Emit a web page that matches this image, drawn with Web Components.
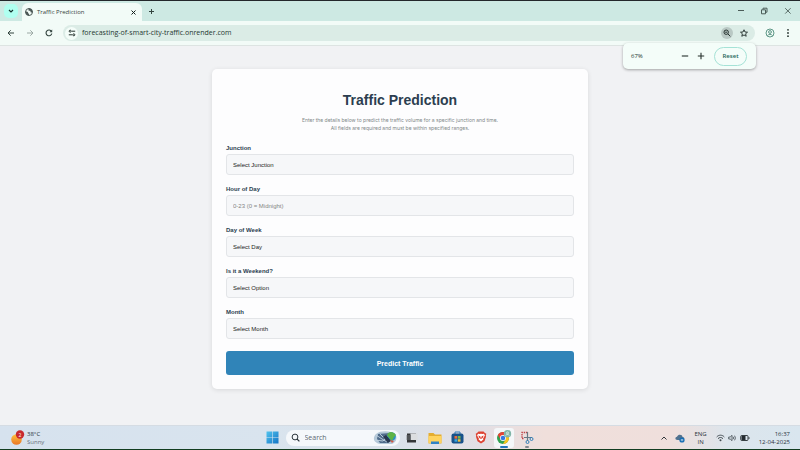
<!DOCTYPE html>
<html lang="en">
<head>
<meta charset="utf-8">
<title>Traffic Prediction</title>
<style>
body{margin:0;font-family:"Open Sans","Noto Sans",sans-serif;font-size:7px;color:#23332f}
</style>
</head>
<body>
<desktop-screen></desktop-screen>
<script>
const define = (name, html) => {
  const t = document.createElement('template');
  t.innerHTML = `<style>*{box-sizing:border-box}button{border:0;background:none;padding:0;margin:0;font:inherit;color:inherit;display:grid;place-items:center;flex:none}svg{display:block;overflow:visible}</style>` + html;
  customElements.define(name, class extends HTMLElement {
    constructor() {
      super();
      this.attachShadow({mode: 'open'}).append(t.content.cloneNode(true));
    }
  });
};

define('tab-strip', `
<style>
:host{display:flex;align-items:center;height:21px;background:#cde9e3;border-top:1px solid #23272b;flex:none}
.search{width:14px;height:14px;border-radius:5px;background:#b0fff0;margin:0 4px 0 4px}
.tab{display:flex;align-items:center;align-self:end;width:120px;height:18px;padding:0 6px 0 3px;background:#f2fbf7;border-radius:6px 6px 0 0;gap:4px;line-height:10px}
.title{flex:1;font-size:6px;color:#374541}
.new{margin-left:6px}
.win{margin-left:auto;display:flex;gap:14px;padding-right:7px}
</style>
<button class="search" aria-label="Search tabs"><svg width="6" height="4" viewBox="0 0 6 4"><path d="M1 1l2 2 2-2" fill="none" stroke="#12322b" stroke-width="1.2"/></svg></button>
<div class="tab">
 <svg width="8" height="8" viewBox="0 0 16 16"><circle cx="8" cy="8" r="7" fill="#f2fbf7" stroke="#4a5654" stroke-width="2"/><path d="M1 7c3 0 5 0 5 2s3 2 2 6C4 15 1 12 1 7zM7 1c5-1 8 3 8 7-2 2-4 1-4-1 0-3-4 0-4-3z" fill="#4a5654"/></svg>
 <span class="title">Traffic Prediction</span>
 <button aria-label="Close tab"><svg width="5" height="5" viewBox="0 0 5 5"><path d="M.5.5l4 4m0-4l-4 4" stroke="#111d1a" stroke-width="1"/></svg></button>
</div>
<button class="new" aria-label="New tab"><svg width="7" height="7" viewBox="0 0 7 7"><path d="M3.500 1v5M1 3.500h5" stroke="#33443f" stroke-width="1"/></svg></button>
<div class="win">
 <button aria-label="Minimise"><svg width="8" height="8" viewBox="0 0 8 8"><path d="M1 3.500h6" stroke="#4b5c58" stroke-width="1"/></svg></button>
 <button aria-label="Restore"><svg width="10" height="8" viewBox="0 0 10 8"><path d="M2.500 2.800h4v4h-4zM4 2.500V1.200h4v4H6.800" fill="none" stroke="#4b5c58" stroke-width="1" stroke-linejoin="round"/></svg></button>
 <button aria-label="Close"><svg width="10" height="8" viewBox="0 0 10 8"><path d="M2.200 1.200l5.400 5.400m0-5.400L2.200 6.600" stroke="#4b5c58" stroke-width=".9"/></svg></button>
</div>`);

define('zoom-bubble', `
<style>
:host{position:absolute;right:44px;top:22px;z-index:2;display:flex;align-items:center;width:133px;height:26px;padding:0 9px 0 8px;border-radius:5px;background:#f4fdf9;box-shadow:0 1px 3px #0005;font-size:6px}
.v{flex:1}
.reset{width:33px;height:19px;border:1px solid #a5e2d6;border-radius:10px;color:#1c6458;font-weight:600;margin-left:9px}
.plus{margin-left:8px}
</style>
<span class="v">67%</span>
<button aria-label="Zoom out"><svg width="8" height="8" viewBox="0 0 8 8"><path d="M.8 4h6.400" stroke="#26302d" stroke-width="1.100"/></svg></button>
<button class="plus" aria-label="Zoom in"><svg width="8" height="8" viewBox="0 0 8 8"><path d="M.8 4h6.400M4 .8v6.400" stroke="#26302d" stroke-width="1.100"/></svg></button>
<button class="reset">Reset</button>`);

define('nav-bar', `
<style>
:host{position:relative;display:flex;align-items:center;height:25px;padding:0 8px 0 6px;background:#f2fbf7;border-bottom:1px solid #dde4e2;flex:none}
.nav{display:flex;gap:9px}
.box{display:flex;align-items:center;flex:1;height:16px;border-radius:8px;background:#dbece6;margin:0 10px 0 9px;padding:0 7px 0 2px}
.site{width:13px;height:13px;border-radius:50%;background:#f4fdf9}
input{flex:1;min-width:0;border:0;padding:0 0 0 4px;background:none;font:inherit;color:#253731;font-size:7px;line-height:12px;outline:0}
.mag{width:12px;height:12px;border-radius:50%;background:#b9c8c4;margin-right:7px}
.menu{margin-left:9px}
</style>
<div class="nav">
<button aria-label="Back"><svg width="10" height="10" viewBox="0 0 10 10"><path d="M8 5H2.200M4.700 2.300L2 5l2.700 2.700" fill="none" stroke="#33443f" stroke-width="1"/></svg></button>
<button aria-label="Forward"><svg width="10" height="10" viewBox="0 0 10 10"><path d="M2 5h5.800M5.300 2.300L8 5 5.300 7.700" fill="none" stroke="#9ba8a4" stroke-width="1"/></svg></button>
<button aria-label="Reload"><svg width="10" height="10" viewBox="0 0 10 10"><path d="M7.500 3.500A2.900 2.900 0 1 0 7.800 5.500" fill="none" stroke="#33443f" stroke-width="1.100"/><path d="M8.200 1.500v2.700H5.500z" fill="#33443f"/></svg></button>
</div>
<div class="box">
<button class="site" aria-label="Site information"><svg width="8" height="8" viewBox="0 0 8 8"><g fill="none" stroke="#26332f"><circle cx="2.200" cy="2.200" r="1"/><path d="M3.800 2.200h3.400M.8 5.800h3.400"/><circle cx="5.800" cy="5.800" r="1"/></g></svg></button>
<input aria-label="Address" value="forecasting-of-smart-city-traffic.onrender.com">
<button class="mag" aria-label="Zoom"><svg width="8" height="8" viewBox="0 0 8 8"><circle cx="3.200" cy="3.200" r="2.200" fill="none" stroke="#26332f"/><path d="M4.900 4.900l2.400 2.400M2.200 3.200h2" stroke="#26332f"/></svg></button>
<button aria-label="Bookmark"><svg width="8" height="8" viewBox="0 0 16 16"><path d="M8 1.500l2 4.500 5 .4-3.800 3.200 1.200 4.900L8 11.900l-4.400 2.600 1.200-4.900L1 6.400 6 6z" fill="none" stroke="#26332f" stroke-width="1.900"/></svg></button>
</div>
<button aria-label="Profile"><svg width="10" height="10" viewBox="0 0 10 10"><g fill="none" stroke="#4d8c7a" stroke-width=".9"><circle cx="5" cy="5" r="4"/><circle cx="5" cy="4" r="1.400"/><path d="M2.500 7.700c1-1.900 4-1.900 5 0"/></g></svg></button>
<button class="menu" aria-label="Menu"><svg width="8" height="10" viewBox="0 0 8 10"><g fill="#26332f"><circle cx="4" cy="1.800" r=".9"/><circle cx="4" cy="5" r=".9"/><circle cx="4" cy="8.200" r=".9"/></g></svg></button>
<zoom-bubble></zoom-bubble>`);

customElements.define('form-field', class extends HTMLElement {
  constructor() {
    super();
    const label = this.getAttribute('label'), text = this.getAttribute('text');
    const control = this.hasAttribute('number')
      ? `<input id="c" type="text" inputmode="numeric" placeholder="${text}">`
      : `<select id="c"><option>${text}</option></select>`;
    this.attachShadow({mode: 'open'}).innerHTML = `<style>
*{box-sizing:border-box}
:host{display:grid;gap:2px}
label{font-size:6px;line-height:8px;font-weight:700;color:#2c3e50}
input,select{appearance:none;width:100%;height:21px;border:1px solid #e3e5e8;border-radius:3px;background:#f6f7f9;padding:0 6px;font:inherit;font-size:6px;color:#1b1e21;outline:0}
input::placeholder{color:#858585;opacity:1}
</style><label for="c">${label}</label>${control}`;
  }
});

define('prediction-card', `
<style>
:host{display:block;width:47%;min-width:260px;padding:22px 14px 14px;background:#fdfdfe;border-radius:5px;box-shadow:0 1px 5px #0000001c;font-family:"Liberation Sans",Arial,sans-serif}
h1{margin:0 0 7px;font-size:14px;line-height:18px;color:#2c3e50;text-align:center}
p{margin:0 0 12px;font-family:Inter,"Liberation Sans",sans-serif;font-size:5px;line-height:8px;color:#7f8889;text-align:center}
form{display:grid;gap:10px}
.go{width:100%;height:24px;margin-top:2px;border-radius:3px;background:#3084b8;color:#fff;font-size:7px;font-weight:700}
</style>
<h1>Traffic Prediction</h1>
<p>Enter the details below to predict the traffic volume for a specific junction and time.<br>All fields are required and must be within specified ranges.</p>
<form>
<form-field label="Junction" text="Select Junction"></form-field>
<form-field label="Hour of Day" text="0-23 (0 = Midnight)" number></form-field>
<form-field label="Day of Week" text="Select Day"></form-field>
<form-field label="Is it a Weekend?" text="Select Option"></form-field>
<form-field label="Month" text="Select Month"></form-field>
<button class="go" type="button">Predict Traffic</button>
</form>`);

define('task-bar', `
<style>
:host{display:grid;grid-template-columns:1fr auto 1fr;align-items:center;height:25px;flex:none;background:linear-gradient(90deg,#d6e2ee 0,#d9e4ee 34%,#dbe2ea 50%,#e3dfe4 60%,#f0dfdb 68%,#efdfdc 84%,#dce5ec 91%,#d9e6ef);border-top:1px solid #d5dce3;border-bottom:1px solid #123d20;font-size:6px;line-height:8px;color:#29323a}
.weather{display:flex;align-items:center;gap:2px;padding-left:10px}
.weather span{display:block}.weather .s{color:#66717b}
.mid{display:flex;align-items:center;gap:7px;padding-left:2px}
.search{display:flex;align-items:center;width:114px;height:16px;border-radius:8px;background:#f5f8fb;padding:0 3px 0 5px;gap:5px}
.search input{flex:1;min-width:0;border:0;padding:0;background:none;font:inherit;font-size:7px;outline:0}
.search input::placeholder{color:#5c666f;opacity:1}
.apps{display:flex;gap:3px;margin-left:-5px}
.apps button{width:20px;height:20px;border-radius:3px;position:relative}
.apps .active{background:#f4f7f9}
.active::after,.run::after{content:"";position:absolute;bottom:0;left:6px;width:8px;height:2px;border-radius:1px;background:#2376bd}
.run::after{left:8px;width:4px;background:#818890}
.tray{display:flex;align-items:center;justify-content:end;padding-right:10px}
.lang{text-align:center;margin:0 9px 0 9px}
.time{text-align:right;margin-left:9px}
.cloud{margin-left:7px}
.stat{display:flex;gap:3px}
</style>
<div class="weather">
<svg width="15" height="16" viewBox="0 0 15 16"><defs><linearGradient id="sun" x2="0" y2="1"><stop stop-color="#ffc33b"/><stop offset="1" stop-color="#e97526"/></linearGradient></defs><circle cx="6.500" cy="9.500" r="5.300" fill="url(#sun)"/><circle cx="10" cy="4.500" r="4.200" fill="#c8292e"/><text x="10" y="6.500" text-anchor="middle" font-size="5" fill="#fff">2</text></svg>
<div><span>38°C</span><span class="s">Sunny</span></div>
</div>
<div class="mid">
<button aria-label="Start"><svg width="13" height="13" viewBox="0 0 13 13"><defs><linearGradient id="w" x2="1" y2="1"><stop stop-color="#51c4ee"/><stop offset="1" stop-color="#1474c5"/></linearGradient></defs><path d="M.5.5h5.700v5.700H.5zM6.800.5h5.700v5.700H6.800zM.5 6.800h5.700v5.700H.5zM6.800 6.800h5.700v5.700H6.800z" fill="url(#w)"/></svg></button>
<div class="search"><svg width="9" height="9" viewBox="0 0 9 9"><circle cx="4" cy="4" r="2.900" fill="none" stroke="#2b343b"/><path d="M6 6l2.400 2.400" stroke="#2b343b" stroke-width="1.200"/></svg>
<input aria-label="Search" placeholder="Search">
<svg width="24" height="14" viewBox="0 0 24 14"><path d="M3 3C8-1 18 0 22 3c3 4 1 8-3 10H7C1 12-1 7 3 3z" fill="#b4c8d8"/><path d="M5 3l12-1-2 10H7L4 8z" fill="#506c8b"/><path d="M3 4l6 4 5 3M7 3l8 8M2 9l8 1 6-6" stroke="#c3d5e2" stroke-width=".9" fill="none"/><circle cx="18.500" cy="5.500" r="4.300" fill="#268fc6"/><path d="M14 4c2-5 7-3 9 0l-2 2-2 4-3-3z" fill="#5eb346"/><path d="M10 6l5 6 3-2-5-6z" fill="#26374f"/><path d="M17 9l2 3 2-2z" fill="#d55543"/></svg></div>
<div class="apps">
<button aria-label="Task view"><svg width="12" height="12" viewBox="0 0 12 12"><rect x="1" y="1.500" width="9" height="9" fill="#343638"/><rect x="4.500" y="1.500" width="7" height="6.500" fill="#dcdee0"/><rect x=".5" y="3" width="4.500" height="5" fill="#606467" opacity=".65"/></svg></button>
<button aria-label="File Explorer"><svg width="14" height="12" viewBox="0 0 14 12"><path d="M.5 1h5l1.500 1.500h6.500v9H.5z" fill="#e4ad30"/><path d="M.5 4h13v7H.5z" fill="#ffd35e"/><path d="M3 9.500h8V12H3z" fill="#3082c6"/></svg></button>
<button aria-label="Store"><svg width="13" height="13" viewBox="0 0 13 13"><path d="M4 3V1h5v2" stroke="#317bb6" fill="none"/><rect x=".5" y="2.500" width="12" height="10" rx="2" fill="#18528a"/><path d="M3.500 5h2.700v2.700H3.500z" fill="#e86b3f"/><path d="M6.800 5h2.700v2.700H6.800z" fill="#77b84a"/><path d="M3.500 8.200h2.700v2.500H3.500z" fill="#36a6df"/><path d="M6.800 8.200h2.700v2.500H6.800z" fill="#efc13c"/></svg></button>
<button aria-label="Brave"><svg width="12" height="13" viewBox="0 0 12 13"><path d="M3.500.5h5L10 2l1.300.7-.5 2 .2 1-1.500 4.600L6 12.600l-3.500-2.300L1 5.700l.2-1-.5-2L2 2z" fill="#dd4232"/><path d="M3 2.700l1.800.4L6 2.800l1.200.3L9 2.700l.9 1.700-1.800 3 .3 1L6 10.500 3.600 8.400l.3-1-1.800-3z" fill="#fff"/><path d="M3.300 4.500l2 .8L6 7.500l.7-2.200 2-.8-1 2.500-1.700 1-1.700-1z" fill="#dd4232"/></svg></button>
<button class="active" aria-label="Chrome"><svg width="16" height="15" viewBox="0 0 16 15"><circle cx="7" cy="8" r="6" fill="#31a151"/><path d="M1.800 5A6 6 0 0 1 12.200 5H7L4.500 9.500z" fill="#e64335"/><path d="M12.200 5A6 6 0 0 1 7 14l2.600-4.500L7 5z" fill="#fbc41c"/><circle cx="7" cy="8" r="3" fill="#fff"/><circle cx="7" cy="8" r="2.300" fill="#357ae2"/><circle cx="11.500" cy="3.800" r="3.700" fill="#81b5a7"/><g fill="none" stroke="#e2f5ee" stroke-width=".8"><circle cx="11.500" cy="2.900" r="1"/><path d="M9.500 5.700c1-1.600 3-1.600 4 0"/></g></svg></button>
<button class="run" aria-label="Snipping Tool"><svg width="14" height="14" viewBox="0 0 14 14"><path d="M7.500 1.500H2v6h2" fill="none" stroke="#bf4548" stroke-width="1.300" stroke-dasharray="1.500 .8"/><path d="M7.500 1v9M4 6.500h8" stroke="#667984" stroke-width="1.200"/><circle cx="7.500" cy="11" r="1.500" fill="none" stroke="#3180b9"/><circle cx="11.500" cy="8" r="1.500" fill="none" stroke="#3180b9"/></svg></button>
</div></div>
<div class="tray">
<button aria-label="Hidden icons"><svg width="8" height="6" viewBox="0 0 8 6"><path d="M1.500 4.500L4 2l2.500 2.500" fill="none" stroke="#30363a" stroke-width="1"/></svg></button>
<svg class="cloud" width="10" height="10" viewBox="0 0 10 10"><path d="M2.500 7C-.5 7 .2 3.800 2 3.800 3 .8 7.500 1.200 7.500 4 10 4 9.700 7 8 7z" fill="#50718e"/><circle cx="7" cy="7" r="2.600" fill="#176cb3"/><path d="M5.800 6.500h2.400M5.800 7.600h2.400" stroke="#fff" stroke-width=".5"/></svg>
<div class="lang">ENG<br>IN</div>
<div class="stat">
<svg width="9" height="8" viewBox="0 0 9 8"><g fill="none" stroke="#40494f" stroke-width="1"><path d="M.7 3c2-2.400 5.600-2.400 7.600 0M2 4.700c1.300-1.600 3.700-1.600 5 0"/></g><circle cx="4.500" cy="6.300" r="1" fill="#40494f"/></svg>
<svg width="9" height="8" viewBox="0 0 9 8"><g fill="none" stroke="#40494f" stroke-width=".8"><path d="M.7 3h1.500L4 1.300v5.400L2.200 5H.7zM5.200 2.800q.8 1.200 0 2.400M6.600 1.700q1.600 2.300 0 4.600"/></g></svg>
<svg width="10" height="8" viewBox="0 0 10 8"><rect x=".7" y="1.500" width="7.300" height="5" rx="1" fill="none" stroke="#242b30" stroke-width=".9"/><rect x="1.500" y="2" width="4" height="4" fill="#242b30"/><path d="M9 3.300v1.500" stroke="#242b30"/></svg>
</div>
<div class="time">16:37<br>12-04-2025</div>
</div>`);

define('desktop-screen', `
<style>
:host{display:flex;flex-direction:column;min-height:100vh}
main{flex:1;display:flex;justify-content:center;align-items:start;padding:23px 0 36px;background:#f1f2f4}
</style>
<tab-strip></tab-strip>
<nav-bar></nav-bar>
<main><prediction-card></prediction-card></main>
<task-bar></task-bar>`);
</script>
</body>
</html>
